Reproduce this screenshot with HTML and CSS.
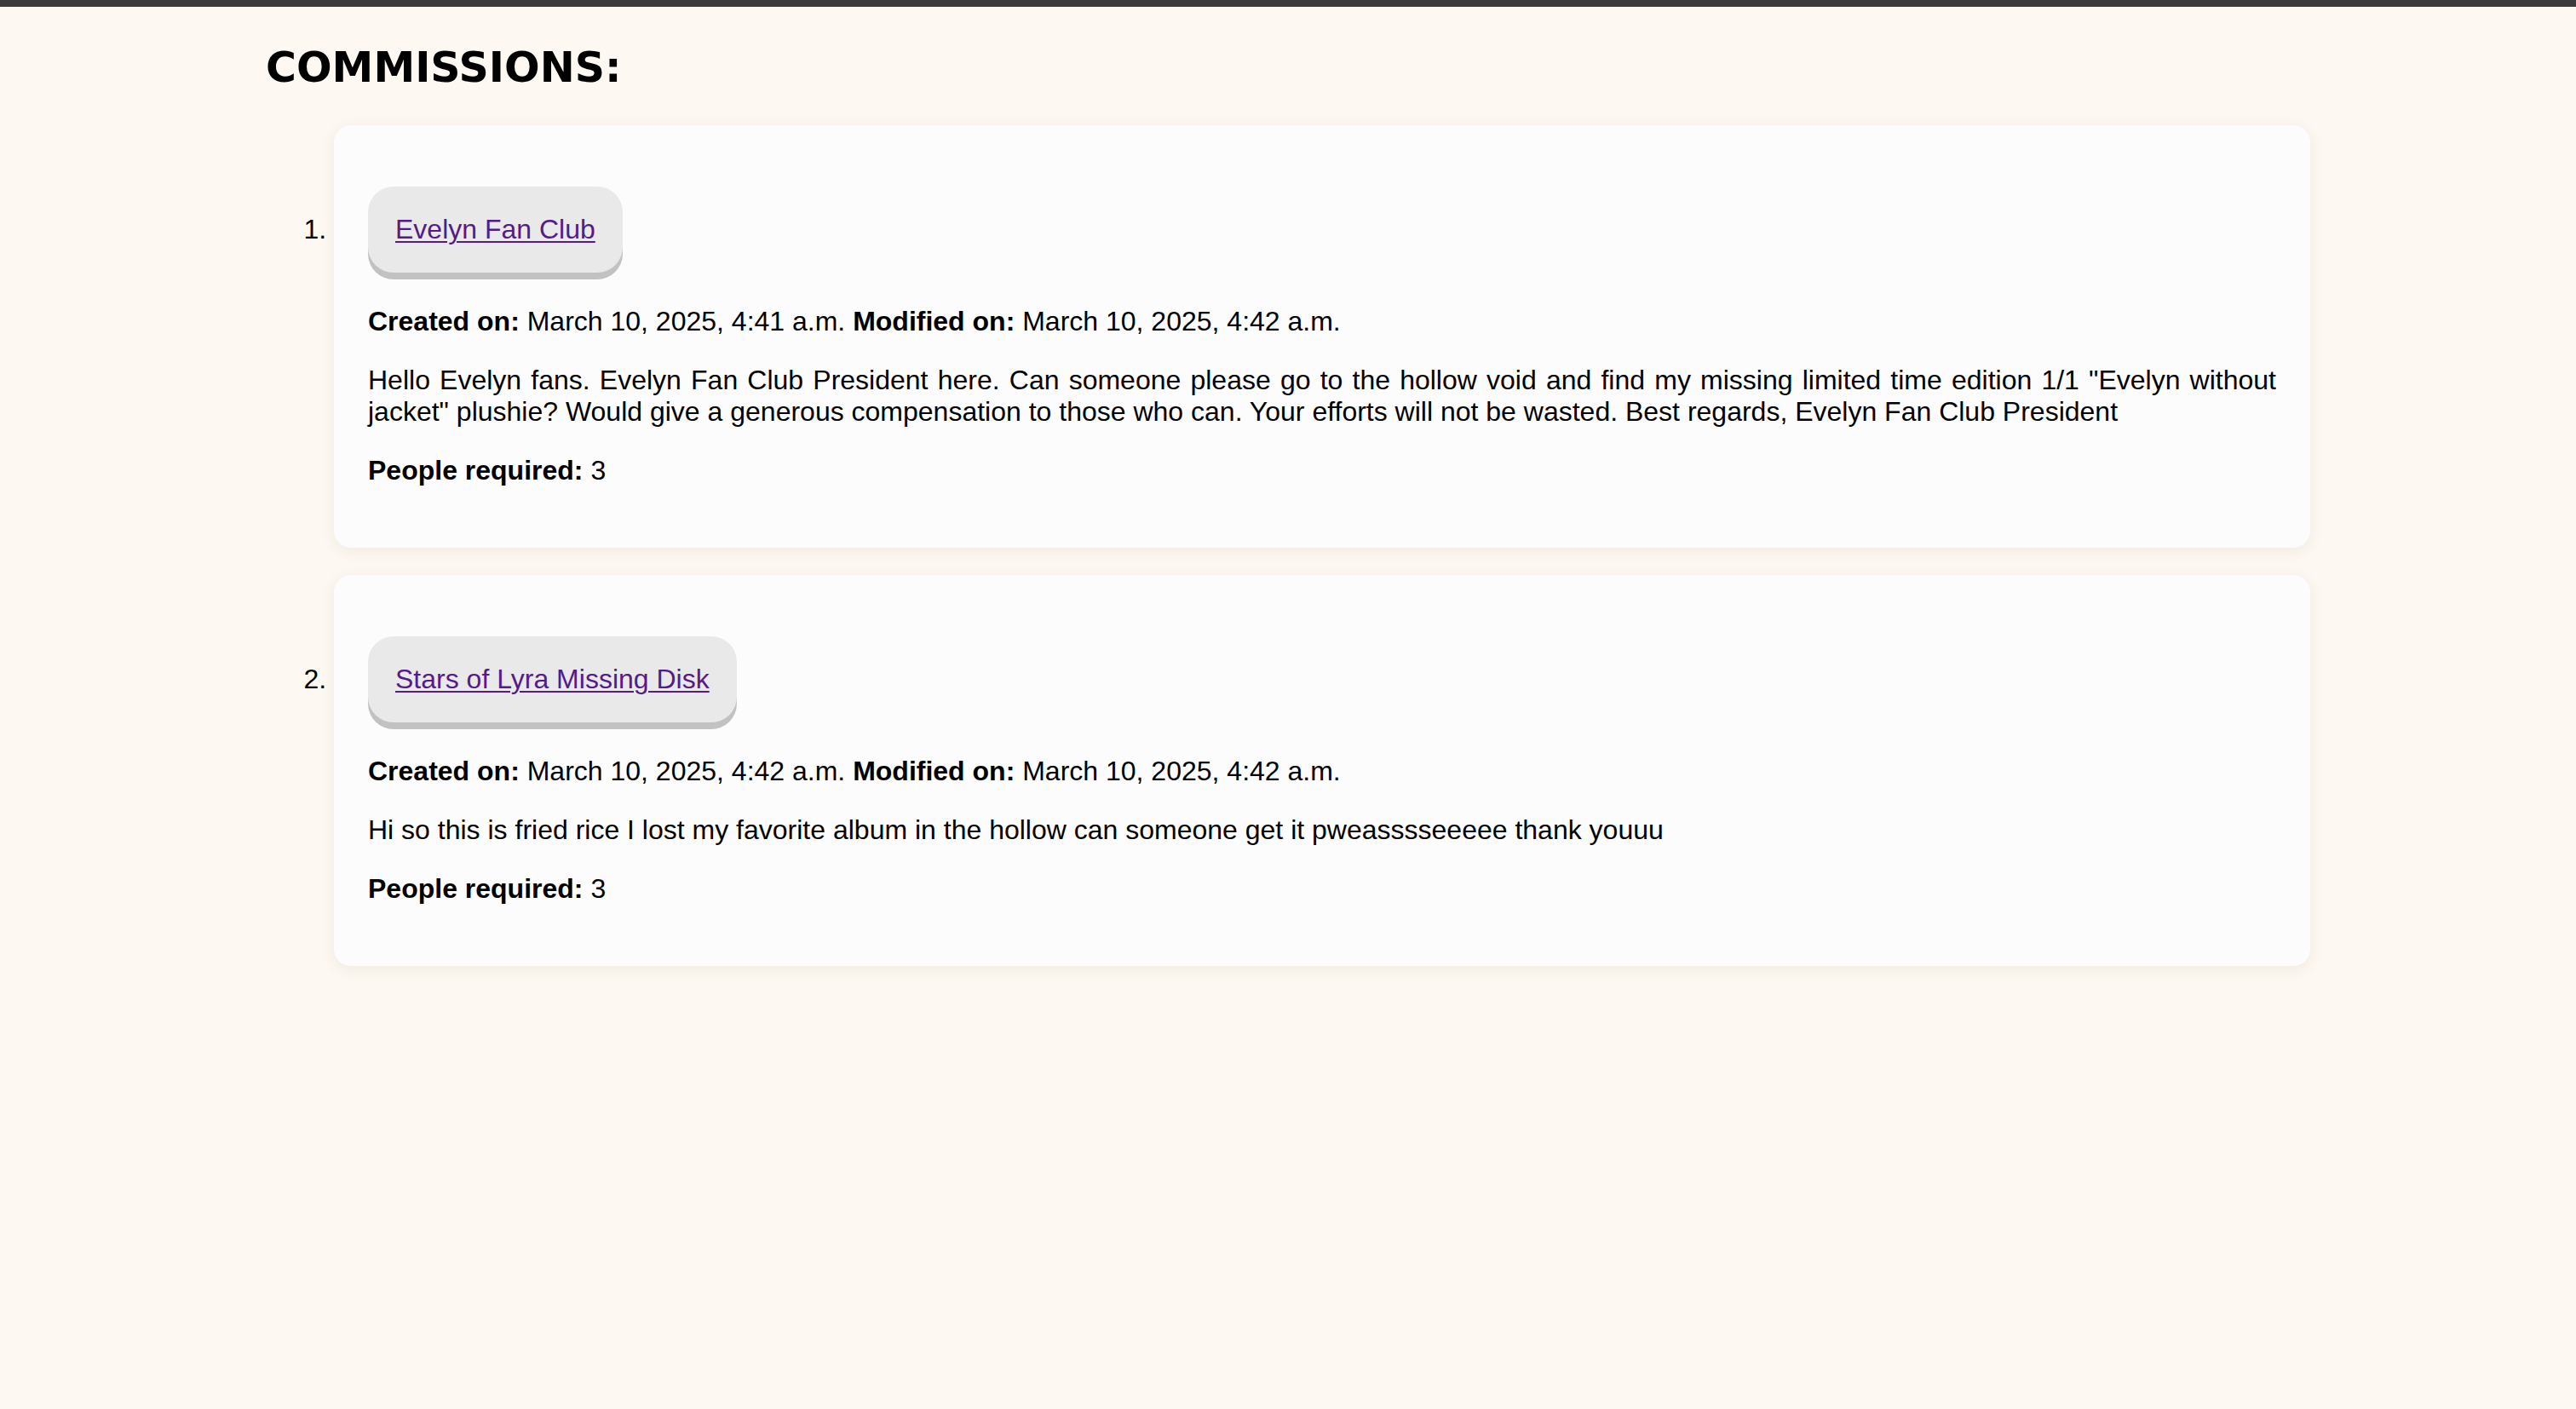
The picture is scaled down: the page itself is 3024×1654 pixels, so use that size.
FILE: index.html
```html
<!DOCTYPE html>
<html lang="en">
<head>
<meta charset="utf-8">
<title>Commissions</title>
<link rel="stylesheet" href="styles.css">
</head>
<body>
<div class="topbar"></div>
<main class="container">
  <h2 class="page-title">COMMISSIONS:</h2>
  <ol class="commission-list">
    <li class="card">
      <div class="card-title"><a class="title-btn" href="#">Evelyn Fan Club</a></div>
      <p class="meta"><strong>Created on:</strong> March 10, 2025, 4:41 a.m. <strong>Modified on:</strong> March 10, 2025, 4:42 a.m.</p>
      <p class="desc">Hello Evelyn fans. Evelyn Fan Club President here. Can someone please go to the hollow void and find my missing limited time edition 1/1 "Evelyn without jacket" plushie? Would give a generous compensation to those who can. Your efforts will not be wasted. Best regards, Evelyn Fan Club President</p>
      <p class="meta"><strong>People required:</strong> 3</p>
    </li>
    <li class="card">
      <div class="card-title"><a class="title-btn" href="#">Stars of Lyra Missing Disk</a></div>
      <p class="meta"><strong>Created on:</strong> March 10, 2025, 4:42 a.m. <strong>Modified on:</strong> March 10, 2025, 4:42 a.m.</p>
      <p class="desc">Hi so this is fried rice I lost my favorite album in the hollow can someone get it pweasssseeeee thank youuu</p>
      <p class="meta"><strong>People required:</strong> 3</p>
    </li>
  </ol>
</main>
</body>
</html>
```
FILE: styles.css
```css
html, body {
  margin: 0;
  padding: 0;
}

body {
  background: #fdf8f1;
  color: #000;
  font-family: "Liberation Sans", Arial, Helvetica, sans-serif;
  font-size: 32px;
  min-height: 1654px;
}

.topbar {
  height: 8px;
  background: #3b3b3b;
}

.container {
  width: 2400px;
  margin: 0 auto;
}

.page-title {
  font-family: "DejaVu Sans", Verdana, sans-serif;
  font-weight: bold;
  font-size: 49px;
  line-height: 57px;
  margin: 43px 0 39px;
}

.commission-list {
  margin: 0;
  padding: 0 0 0 80px;
}

.card {
  background: #fcfcfc;
  border-radius: 20px;
  padding: 40px;
  margin-bottom: 32px;
  box-shadow: 0 4px 18px rgba(60, 40, 20, 0.07);
}

.card-title {
  margin: 32px 0 39px;
}

.title-btn {
  display: inline-block;
  padding: 32px;
  background: #e9e9e9;
  border-radius: 30px;
  box-shadow: 0 8px 0 #c2c2c2;
  color: #551a8b;
  text-decoration: underline;
  text-decoration-thickness: 2px;
  text-underline-offset: 3px;
}

.card p {
  margin: 32px 0;
}

.desc {
  text-align: justify;
}
```
